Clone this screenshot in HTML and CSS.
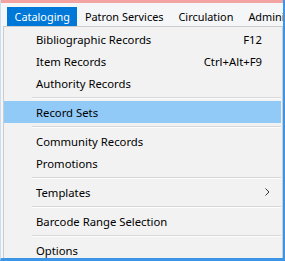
FILE: index.html
```html
<!DOCTYPE html>
<html lang="en">
<head>
    <meta charset="UTF-8">
    <title>Cataloging menu</title>
<link rel="stylesheet" href="styles.css">
</head>
<body>
    <div class="screen">
        <div class="topstrip"></div>
        <div class="menubar">
            <span class="menu-title active">Cataloging</span>
            <span class="menu-title">Patron Services</span>
            <span class="menu-title">Circulation</span>
            <span class="menu-title">Administration</span>
        </div>
        <div class="dropdown">
            <div class="item"><span class="label">Bibliographic Records</span><span class="key">F12</span></div>
            <div class="item"><span class="label">Item Records</span><span class="key">Ctrl+Alt+F9</span></div>
            <div class="item"><span class="label">Authority Records</span></div>
            <div class="separator"></div>
            <div class="item hover"><span class="label">Record Sets</span></div>
            <div class="separator"></div>
            <div class="item"><span class="label">Community Records</span></div>
            <div class="item"><span class="label">Promotions</span></div>
            <div class="separator"></div>
            <div class="item"><span class="label">Templates</span>
                <svg class="submenu" width="5" height="8" viewBox="0 0 5 8"><polyline points="0.5,0.5 4,4 0.5,7.5" fill="none" stroke="#333" stroke-width="1"/></svg>
            </div>
            <div class="separator"></div>
            <div class="item"><span class="label">Barcode Range Selection</span></div>
            <div class="separator"></div>
            <div class="item"><span class="label">Options</span></div>
        </div>
    </div>
</body>
</html>
```

FILE: styles.css
```css
html, body{
    margin: 0;
    padding: 0;
}
body{
    width: 285px;
    height: 261px;
    overflow: hidden;
    font-family: "Noto Sans", "Open Sans", sans-serif;
    font-size: 11.3px;
    color: #000;
}
.screen{
    box-sizing: border-box;
    height: 261px;
    border-left: 1px solid #c9dcf0;
    border-right: 2px solid #3d95e8;
    border-bottom: 3px solid #3d95e8;
    background: #f5f6f7;
    overflow: hidden;
    display: flex;
    flex-direction: column;
}
.topstrip{
    height: 3px;
    flex-shrink: 0;
    background: #f4a3a3;
}
.menubar{
    display: flex;
    flex-shrink: 0;
    white-space: nowrap;
    overflow: hidden;
    height: 19px;
    padding: 4px 0 0 6px;
    font-size: 10.9px;
}
.menu-title{
    padding: 0 7.5px;
    line-height: 19px;
}
.menu-title.active{
    background: #0078d7;
    color: #fff;
}
.dropdown{
    margin-left: 2px;
    border: 1px solid #cccccc;
    background: #f2f2f2;
    padding: 1px 0 2px;
    flex-shrink: 0;
}
.item{
    display: flex;
    align-items: center;
    height: 22px;
    padding: 0 19px 0 32px;
    margin-right: 1px;
    white-space: nowrap;
}
.item .label{
    flex: 1;
}
.item.hover{
    background: #91c9f7;
}
.submenu{
    margin-right: -8px;
}
.separator{
    height: 1px;
    margin: 3px 1px 2px 28px;
    background: #d7d7d7;
    border-bottom: 1px solid #fdfdfd;
}
```
